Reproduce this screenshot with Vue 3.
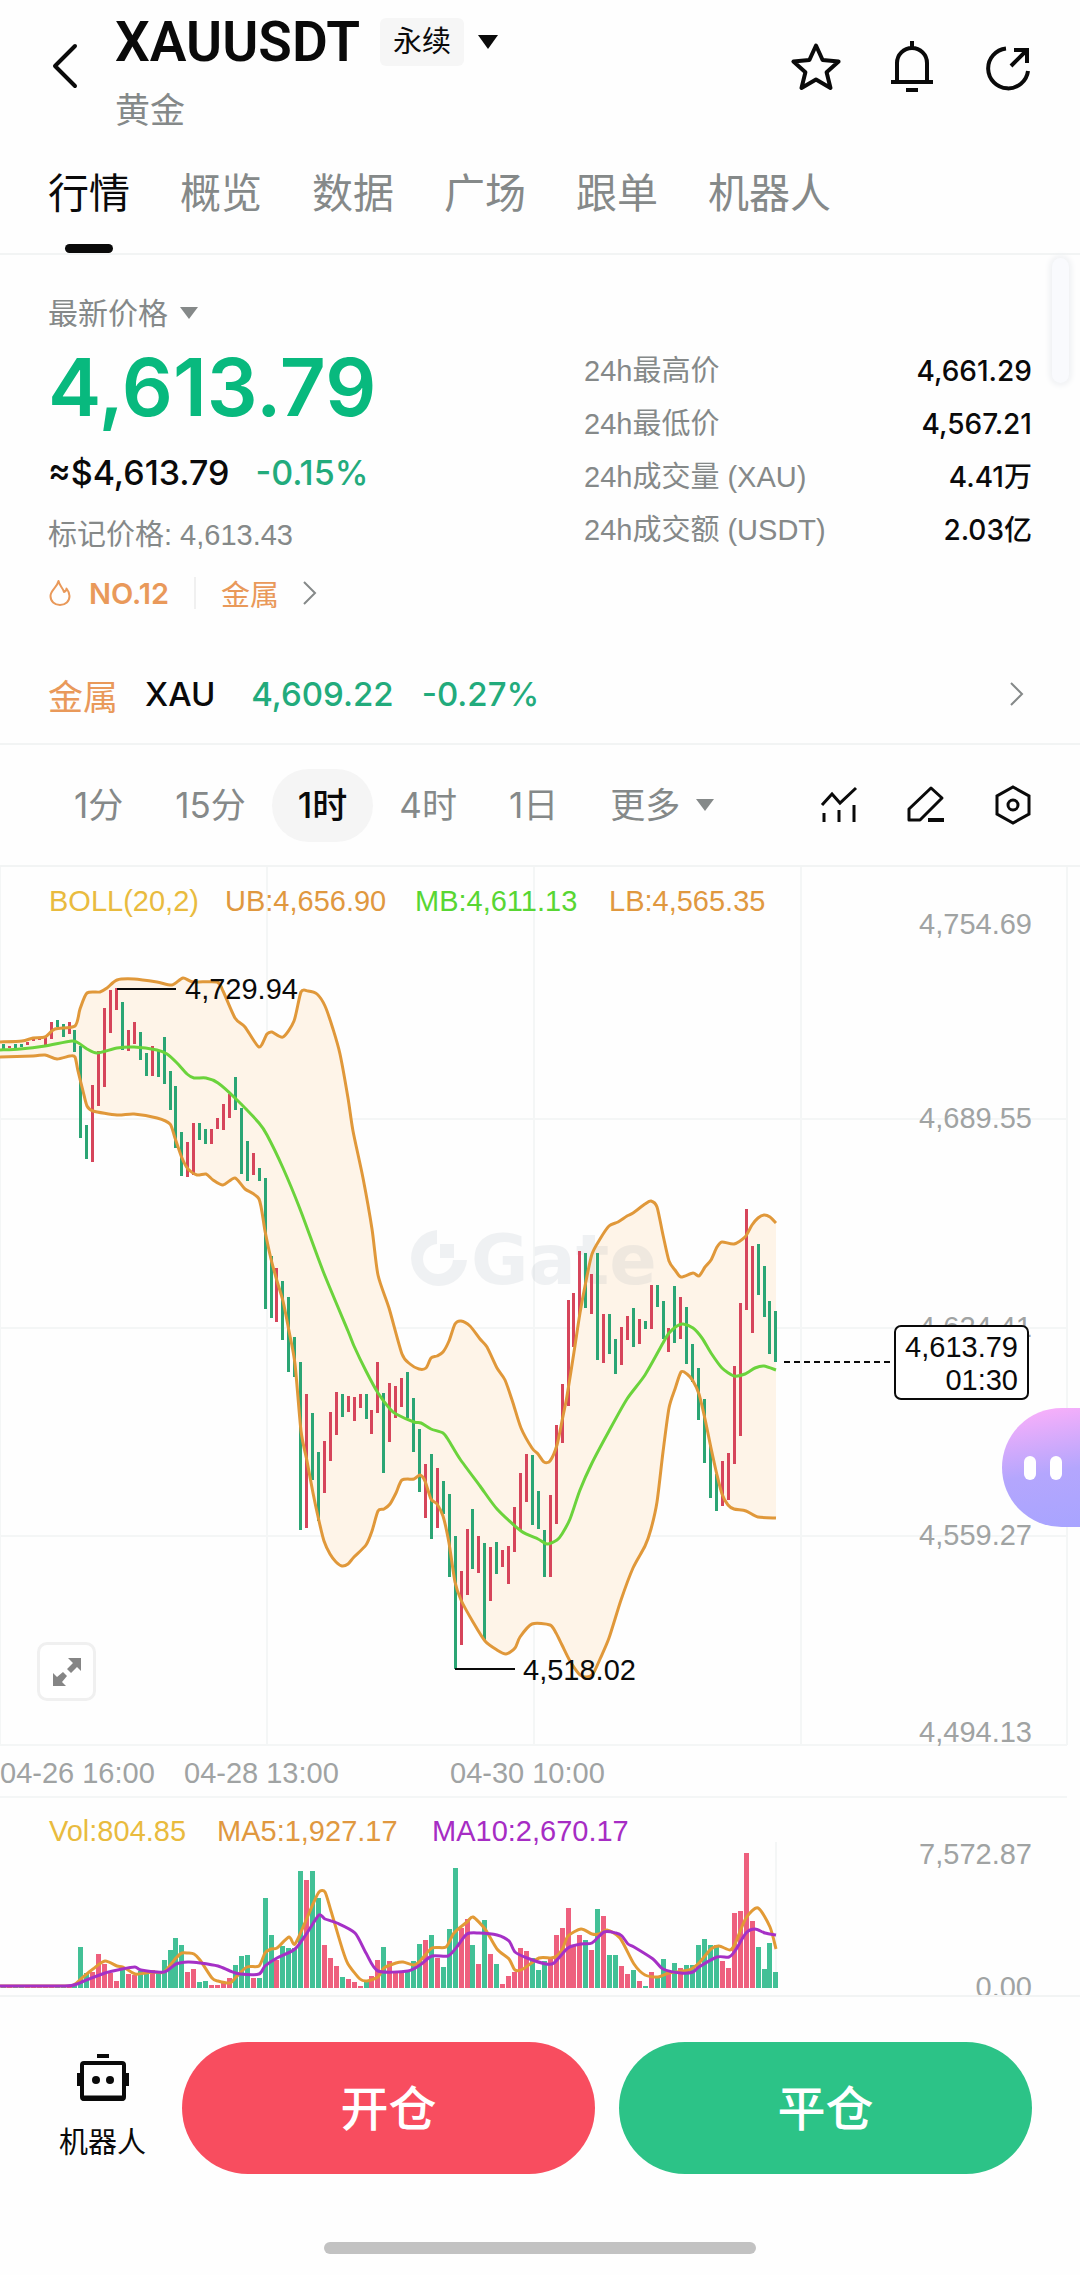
<script setup>
const tabs = ['行情', '概览', '数据', '广场', '跟单', '机器人']
const stats = [
  ['24h最高价', '4,661.29'],
  ['24h最低价', '4,567.21'],
  ['24h成交量 (XAU)', '4.41万'],
  ['24h成交额 (USDT)', '2.03亿']
]
const periods = ['1分', '15分', '1时', '4时', '1日']

const GREEN = '#2ba574'
const RED = '#d6455b'
const VOL_GREEN = '#42c096'
const VOL_RED = '#ee607e'

// direction, high, low
const candles = `g1043-1048 r1045-1047 g1043-1047 g1043-1046 r1041-1044 r1037-1040 r1036-1039 r1036-1044 r1021-1038 g1019-1026
g1023-1036 r1021-1033 g1029-1051 g1045-1137 g1124-1158 r1084-1161 r1050-1105 r1007-1086 r989-1032 r987-1009
g1001-1049 r1029-1050 r1021-1043 g1031-1059 g1052-1075 r1045-1075 g1050-1076 g1036-1083 g1070-1109 g1085-1147
g1131-1175 r1141-1176 r1122-1174 g1122-1139 g1128-1143 r1128-1143 r1117-1128 r1103-1129 r1093-1117 g1076-1109
g1107-1173 g1140-1180 r1152-1174 g1167-1180 g1177-1308 g1255-1317 r1267-1321 g1280-1339 g1296-1371 g1336-1376
g1361-1529 r1393-1527 g1412-1479 g1451-1520 r1440-1492 r1411-1460 r1391-1434 g1393-1416 r1395-1411 r1396-1420
r1393-1407 g1393-1418 r1409-1433 r1361-1412 g1392-1472 r1382-1441 r1385-1417 r1377-1406 g1371-1417 g1397-1451
g1428-1491 r1463-1517 g1453-1538 r1467-1527 g1480-1513 g1493-1576 g1535-1668 r1570-1644 r1528-1594 g1508-1568
r1535-1572 g1542-1639 r1546-1600 g1541-1573 r1549-1566 r1545-1583 r1506-1551 r1472-1529 r1453-1501 g1454-1524
g1490-1528 g1529-1576 r1494-1576 r1424-1523 r1383-1442 r1299-1405 r1292-1346 r1250-1315 g1252-1307 r1273-1313
g1252-1359 r1313-1362 g1313-1353 g1338-1373 r1326-1364 r1315-1339 g1307-1346 r1318-1343 g1320-1328 r1284-1328
g1284-1306 g1300-1338 r1327-1351 g1285-1342 r1296-1338 g1306-1363 g1343-1381 g1367-1419 g1398-1462 g1444-1497
g1473-1510 r1460-1505 r1452-1499 r1365-1463 r1302-1435 r1208-1309 r1245-1332 g1243-1294 g1265-1316 g1300-1353
g1310-1361`.split(/\s+/).map((item, i) => {
  const [high, low] = item.slice(1).split('-').map(Number)
  return { up: item[0] === 'r', high, low, x: 3.7 + 5.94 * i }
})

const volumes = [
  1, 1, 1, 1, 1, 1, 1, 1, 2, 2, 2, 2, 3, 41, 15, 16, 34, 24, 15, 7, 21, 14, 13, 17, 18, 18, 15, 28, 38, 50, 43, 16, 19, 6, 7, 3,
  3, 5, 10, 23, 32, 33, 10, 10, 90, 53, 28, 42, 40, 40, 117, 108, 117, 90, 43, 30, 22, 11, 9, 6, 2, 7, 12, 28, 41, 27,
  17, 17, 17, 27, 44, 48, 53, 30, 21, 59, 120, 60, 69, 43, 24, 68, 34, 24, 4, 12, 16, 40, 37, 30, 18, 27, 30, 53, 60,
  80, 43, 53, 48, 38, 79, 72, 33, 33, 22, 14, 18, 7, 2, 16, 10, 29, 17, 25, 20, 23, 23, 43, 49, 43, 43, 27, 20, 75,
  77, 135, 67, 41, 19, 45, 16
]

const upper = '0,1041 22,1040 33,1037 45,1036 55,1028 75,1025 80,1008 87,992 100,991 107,987 117,979 134,978 157,981 172,984 183,977 193,981 217,981 223,990 235,1017 245,1026 259,1046 267,1033 272,1031 283,1036 294,1020 301,991 308,990 317,993 325,1005 333,1028 340,1053 348,1097 353,1130 363,1177 372,1228 378,1274 389,1307 402,1353 410,1363 419,1368 426,1367 431,1357 437,1355 443,1351 449,1340 455,1323 461,1320 470,1325 480,1338 487,1346 497,1367 505,1379 513,1402 521,1427 532,1447 538,1453 544,1461 550,1460 557,1444 562,1420 567,1395 574,1351 580,1312 586,1280 592,1253 600,1238 609,1225 618,1221 627,1215 633,1212 645,1203 651,1200 657,1206 663,1234 669,1260 675,1269 681,1276 693,1272 699,1275 705,1266 711,1259 717,1246 722,1241 734,1243 745,1236 752,1224 758,1217 764,1214 770,1216 776,1222'
const middle = '0,1049 20,1048 45,1045 72,1040 80,1043 87,1048 97,1052 117,1047 134,1046 157,1049 167,1053 177,1062 187,1073 194,1077 206,1077 218,1082 235,1097 259,1122 267,1134 283,1167 300,1208 323,1270 348,1330 354,1345 366,1370 378,1392 390,1408 396,1413 414,1421 421,1422 431,1428 443,1432 449,1440 460,1458 480,1485 497,1508 521,1530 538,1538 547,1543 557,1539 562,1533 570,1518 580,1489 592,1462 609,1430 627,1398 645,1374 663,1342 669,1332 677,1325 683,1323 693,1327 702,1337 711,1352 722,1367 734,1375 745,1373 755,1367 764,1365 776,1369'
const lower = '0,1056 33,1055 45,1054 57,1058 70,1055 75,1056 78,1070 83,1090 87,1105 93,1110 117,1114 134,1113 157,1117 170,1123 175,1137 182,1157 188,1168 197,1174 206,1173 213,1179 223,1184 235,1177 245,1188 259,1198 265,1230 271,1258 277,1280 283,1300 289,1330 295,1363 301,1430 307,1460 313,1492 319,1520 324,1540 330,1553 336,1561 342,1565 348,1563 354,1556 366,1544 372,1530 378,1510 384,1508 390,1503 396,1492 402,1479 414,1478 420,1474 425,1480 431,1498 437,1503 443,1515 449,1542 455,1581 461,1599 473,1621 485,1640 497,1649 506,1653 515,1647 520,1636 532,1623 550,1624 556,1632 562,1644 570,1660 580,1674 587,1676 593,1673 600,1658 609,1637 621,1599 633,1567 645,1545 651,1528 657,1501 663,1451 669,1407 675,1388 681,1371 687,1373 693,1380 699,1393 705,1418 711,1447 717,1474 722,1493 728,1504 734,1508 746,1510 758,1516 776,1517'
const ma5 = '0,1985 65,1985 75,1983 82,1977 93,1968 105,1960 117,1965 123,1966 135,1973 146,1972 153,1971 164,1971 176,1957 182,1952 188,1952 194,1953 200,1959 212,1977 218,1980 230,1982 236,1976 247,1966 259,1965 265,1952 271,1948 277,1947 289,1936 295,1943 307,1917 313,1903 319,1891 325,1891 331,1910 342,1947 348,1963 360,1978 367,1980 378,1976 384,1967 396,1962 403,1961 414,1964 420,1960 432,1947 446,1946 454,1932 467,1921 473,1916 485,1928 497,1948 509,1958 515,1969 523,1968 539,1957 551,1957 557,1955 563,1947 568,1935 581,1928 592,1933 599,1933 607,1929 620,1937 634,1963 645,1974 658,1976 669,1972 689,1969 699,1962 711,1948 719,1945 730,1949 735,1943 746,1917 758,1907 770,1926 776,1948'
const ma10 = '0,1985 65,1985 77,1983 84,1980 105,1972 122,1968 135,1966 141,1969 164,1971 176,1963 188,1961 200,1962 218,1965 230,1970 240,1973 259,1973 265,1965 277,1957 295,1948 307,1932 319,1914 325,1918 337,1922 355,1932 366,1952 378,1970 408,1970 420,1964 432,1955 448,1955 456,1947 467,1933 479,1932 497,1934 509,1940 515,1951 527,1957 546,1963 554,1962 568,1947 581,1943 592,1942 604,1931 616,1932 622,1935 628,1943 634,1946 653,1958 663,1968 681,1972 693,1971 699,1966 717,1956 729,1956 735,1950 746,1932 755,1928 765,1932 776,1934'

// Rounds the joints of a polyline with short cubic segments
function smooth(points) {
  const p = points.split(' ').map((s) => s.split(',').map(Number))
  let d = `M${p[0]}`
  for (let i = 0; i < p.length - 1; i++) {
    const a = p[i - 1] || p[i]
    const b = p[i]
    const c = p[i + 1]
    const e = p[i + 2] || c
    const k = 8
    d += `C${b[0] + (c[0] - a[0]) / k} ${b[1] + (c[1] - a[1]) / k} ${c[0] - (e[0] - b[0]) / k} ${c[1] - (e[1] - b[1]) / k} ${c[0]} ${c[1]}`
  }
  return d
}
const band = `M${upper.split(' ').join('L')}L${lower.split(' ').reverse().join('L')}Z`

const axis = [
  [933, '4,754.69'],
  [1127, '4,689.55'],
  [1336, '4,624.41'],
  [1544, '4,559.27'],
  [1741, '4,494.13'],
  [1863, '7,572.87'],
  [1996, '0.00']
]
const dates = [
  [0, '04-26 16:00'],
  [184, '04-28 13:00'],
  [450, '04-30 10:00']
]
const legends = [
  [49, 910, '#e9bb3e', 'BOLL(20,2)'],
  [225, 910, '#e0983f', 'UB:4,656.90'],
  [415, 910, '#58d633', 'MB:4,611.13'],
  [609, 910, '#e0983f', 'LB:4,565.35'],
  [49, 1840, '#e9bb3e', 'Vol:804.85'],
  [217, 1840, '#e0983f', 'MA5:1,927.17'],
  [432, 1840, '#a62cc4', 'MA10:2,670.17']
]
</script>

<template>
  <div class="page">
    <header class="header">
      <button class="icon-btn back" aria-label="返回">
        <svg width="28" height="48" viewBox="0 0 28 48"><path d="M24 4 4 24l20 20" fill="none" stroke="#0a0a0a" stroke-width="4" stroke-linecap="round" stroke-linejoin="round" /></svg>
      </button>
      <div class="symbol">
        <div class="symbol-row">
          <h1>XAUUSDT</h1>
          <span class="badge">永续</span>
          <svg width="20" height="14" viewBox="0 0 20 14"><path d="M0 0h20L10 14z" fill="#0a0a0a" /></svg>
        </div>
        <p class="name">黄金</p>
      </div>
      <div class="actions">
        <button class="icon-btn" aria-label="收藏">
          <svg width="52" height="52" viewBox="0 0 52 52"><path d="M26 4.500l6.600 14.500 16 1.600-12 10.600L40.500 47 26 38.500 11.500 47l3.900-15.800-12-10.600 16-1.600z" fill="none" stroke="#0a0a0a" stroke-width="4" stroke-linejoin="round" /></svg>
        </button>
        <button class="icon-btn" aria-label="提醒">
          <svg width="52" height="52" viewBox="0 0 52 52"><g fill="none" stroke="#0a0a0a" stroke-width="4"><path d="M26 0v6M11 41V22a15 15 0 0 1 30 0v19M5 41h42M20 49h12" /></g></svg>
        </button>
        <button class="icon-btn" aria-label="分享">
          <svg width="52" height="52" viewBox="0 0 52 52"><g fill="none" stroke="#0a0a0a" stroke-width="4"><path d="M24 7.500A20 20 0 1 0 46 30M29 25 45 9M32 9h13v13" /></g></svg>
        </button>
      </div>
    </header>

    <nav class="tabs">
      <a v-for="(t, i) in tabs" :key="t" href="#" :class="{ active: i === 0 }">{{ t }}</a>
    </nav>

    <main>
      <section class="summary">
        <div class="quote">
          <button class="price-type">最新价格 <svg width="18" height="12" viewBox="0 0 18 12"><path d="M0 0h18L9 12z" fill="#858989" /></svg></button>
          <div class="price">4,613.79</div>
          <div class="fiat"><span>≈$4,613.79</span><span class="down">-0.15%</span></div>
          <div class="mark">标记价格: 4,613.43</div>
          <div class="tags">
            <svg class="flame" width="24" height="28" viewBox="0 0 24 28"><path d="M10.500 2c1 5 4.500 7 5.500 11 1.500-.5 2.500-2 2.500-3.500 2 2.500 3 5 3 7.500 0 5.500-4 9-9.500 9S2.500 22.500 2.500 17c0-6 6.500-8 8-15z" fill="none" stroke="#e9995a" stroke-width="2" stroke-linejoin="round" /></svg>
            <span class="rank">NO.12</span>
            <i class="divider"></i>
            <a href="#" class="sector">金属
              <svg width="14" height="24" viewBox="0 0 14 24"><path d="M1 1l11 11L1 23" fill="none" stroke="#858989" stroke-width="2" /></svg>
            </a>
          </div>
        </div>
        <dl class="stats">
          <div v-for="s in stats" :key="s[0]"><dt>{{ s[0] }}</dt><dd>{{ s[1] }}</dd></div>
        </dl>
        <div class="side-handle"></div>
      </section>

      <a href="#" class="index-row">
        <span class="metal">金属</span>
        <span class="xau">XAU</span>
        <span class="down">4,609.22</span>
        <span class="down pct">-0.27%</span>
        <svg width="14" height="24" viewBox="0 0 14 24"><path d="M1 1l11 11L1 23" fill="none" stroke="#858989" stroke-width="2" /></svg>
      </a>

      <div class="periods">
        <button v-for="p in periods" :key="p" :class="{ active: p === '1时' }">{{ p }}</button>
        <button class="more">更多 <svg width="18" height="12" viewBox="0 0 18 12"><path d="M0 0h18L9 12z" fill="#858989" /></svg></button>
        <div class="tools">
          <button class="icon-btn" aria-label="指标">
            <svg width="40" height="40" viewBox="0 0 40 40"><g fill="none" stroke="#0a0a0a" stroke-width="3"><path d="M3 20l10-11 8 9L37 3M5 28v9M20 25v12M35 20v17" /></g></svg>
          </button>
          <button class="icon-btn" aria-label="画线">
            <svg width="40" height="40" viewBox="0 0 40 40"><g fill="none" stroke="#0a0a0a" stroke-width="3" stroke-linejoin="round"><path d="M25 3l11 10-22 22H3V24z" /><path d="M22 35h16" stroke-width="4" /></g></svg>
          </button>
          <button class="icon-btn" aria-label="设置">
            <svg width="40" height="40" viewBox="0 0 40 40"><g fill="none" stroke="#0a0a0a" stroke-width="3"><path d="M20 2l16 9v18l-16 9-16-9V11z" /><circle cx="20" cy="20" r="5" /></g></svg>
          </button>
        </div>
      </div>

      <section class="chart">
        <svg viewBox="0 866 1080 1128" class="plot">
          <g fill="none" stroke="#f4f6f6" stroke-width="2">
            <path d="M0 1118H1067M0 1327H1067M0 1535H1067M0 1744H1067M0 1796H1067M0 866V1744M267 866V1744M534 866V1744M801 866V1744M1067 866V1744M776 1841V1987" />
          </g>
          <path :d="band" fill="#fef4e8" />
          <g class="watermark" fill="#8d9aa6" opacity="0.120">
            <path d="M437 1229a28 28 0 1 0 30 30H453a15 15 0 1 1-16-16z" />
            <path d="M440 1243h14v14h-14z" />
            <text x="471" y="1283">Gate</text>
          </g>
          <g stroke-width="3" shape-rendering="crispEdges">
            <path v-for="(c, i) in candles" :key="i" :d="`M${c.x} ${c.high}V${c.low}`" :stroke="c.up ? RED : GREEN" />
          </g>
          <g fill="none" stroke="#e0983a" stroke-width="3" stroke-linejoin="round">
            <path :d="smooth(upper)" />
            <path :d="smooth(lower)" />
            <path :d="smooth(middle)" stroke="#6bd33c" />
          </g>
          <g stroke-width="5" shape-rendering="crispEdges">
            <path v-for="(v, i) in volumes" :key="i" :d="`M${candles[i].x} 1987v${-v}`" :stroke="candles[i].up ? VOL_RED : VOL_GREEN" />
          </g>
          <g fill="none" stroke-width="3" stroke-linejoin="round">
            <path :d="smooth(ma5)" stroke="#e29a36" />
            <path :d="smooth(ma10)" stroke="#a530c6" />
          </g>

          <g class="labels">
            <text v-for="l in legends" :key="l[3]" :x="l[0]" :y="l[1]" :fill="l[2]">{{ l[3] }}</text>
            <g fill="#a0a3a3">
              <text v-for="a in axis" :key="a[1]" x="1032" :y="a[0]" text-anchor="end">{{ a[1] }}</text>
              <text v-for="d in dates" :key="d[1]" :x="d[0]" y="1782">{{ d[1] }}</text>
            </g>
            <path d="M117 988H176M455 1668H515" stroke="#0a0a0a" stroke-width="2" />
            <text x="185" y="998" fill="#0a0a0a">4,729.94</text>
            <text x="523" y="1679" fill="#0a0a0a">4,518.02</text>
            <path d="M784 1361H894" stroke="#0a0a0a" stroke-width="2" stroke-dasharray="6 4" />
            <rect x="895" y="1325" width="133" height="73" rx="6" fill="#fff" stroke="#0a0a0a" stroke-width="2" />
            <g fill="#0a0a0a" text-anchor="end">
              <text x="1018" y="1356">4,613.79</text>
              <text x="1018" y="1389">01:30</text>
            </g>
          </g>
        </svg>
        <button class="expand" aria-label="全屏">
          <svg width="28" height="28" viewBox="0 0 28 28"><g fill="#858585"><path d="M15 0h13v13l-4-4-6 6-4-4 6-6zM13 28H0V15l4 4 6-5 4 4-5 6z" /></g></svg>
        </button>
        <button class="assistant" aria-label="助手"><i></i><i></i></button>
      </section>
    </main>

    <footer class="footer">
      <button class="robot">
        <svg width="52" height="50" viewBox="0 0 52 50"><g fill="none" stroke="#0a0a0a" stroke-width="4"><rect x="5" y="10" width="42" height="36" rx="2" /><path d="M20 3h12M2 20v13M50 20v13" /><path d="M5 45h42" stroke-width="5" /></g><circle cx="19" cy="27" r="4" fill="#0a0a0a" /><circle cx="33" cy="27" r="4" fill="#0a0a0a" /></svg>
        <span>机器人</span>
      </button>
      <button class="trade open">开仓</button>
      <button class="trade close">平仓</button>
    </footer>
    <div class="home-bar"></div>
  </div>
</template>

<style>
body {
  margin: 0;
  background: #fefefe;
}
</style>

<style scoped>
.page {
  font-family: Inter, "Noto Sans CJK SC", sans-serif;
  color: #0a0a0a;
  background: #fefefe;
  overflow: hidden;
}
button {
  font: inherit;
  color: inherit;
  background: none;
  border: 0;
  padding: 0;
}
a {
  color: inherit;
  text-decoration: none;
}
svg {
  display: block;
  flex: none;
}
.header {
  display: flex;
  align-items: flex-start;
  padding: 14px 46px 0 51px;
}
.back {
  margin-top: 28px;
}
.symbol {
  margin-left: 36px;
}
.symbol-row {
  display: flex;
  align-items: center;
  height: 56px;
}
h1 {
  margin: 0;
  font-family: Roboto, sans-serif;
  font-size: 55px;
  line-height: 56px;
  font-weight: 600;
}
.badge {
  margin: 0 14px 0 20px;
  padding: 0 13px;
  font-size: 29px;
  line-height: 48px;
  background: #f6f6f6;
  border-radius: 6px;
}
.name {
  margin: 18px 0 0;
  font-size: 35px;
  line-height: 44px;
  color: #858989;
}
.actions {
  display: flex;
  gap: 44px;
  margin: 27px 0 0 auto;
}
.tabs {
  display: flex;
  gap: 50px;
  padding: 31px 48px 0;
  font-size: 41px;
  color: #858989;
  border-bottom: 2px solid #f2f4f4;
}
.tabs a {
  position: relative;
  line-height: 60px;
  padding-bottom: 30px;
}
.tabs .active {
  color: #0a0a0a;
}
.tabs .active::after {
  content: "";
  position: absolute;
  left: 17px;
  right: 17px;
  bottom: 0;
  height: 9px;
  border-radius: 5px;
  background: #0a0a0a;
}
.summary {
  position: relative;
  display: flex;
  justify-content: space-between;
  padding: 36px 48px 0;
}
.price-type {
  display: flex;
  align-items: center;
  gap: 12px;
  font-size: 30px;
  line-height: 44px;
  color: #858989;
}
.price {
  font-size: 80px;
  font-weight: 600;
  line-height: 104px;
  color: #08b97e;
}
.fiat {
  display: flex;
  gap: 26px;
  font-size: 34px;
  font-weight: 500;
  line-height: 68px;
}
.down {
  color: #22ab7c;
}
.mark,
.stats dt,
.labels {
  font-family: "Liberation Sans", "Noto Sans CJK SC", sans-serif;
  font-size: 29px;
}
.mark {
  line-height: 56px;
  color: #858989;
}
.tags {
  display: flex;
  align-items: center;
  height: 60px;
  font-size: 29px;
  color: #e9995a;
}
.rank {
  margin-left: 17px;
  font-weight: 600;
}
.divider {
  width: 2px;
  height: 32px;
  margin: 0 25px;
  background: #f0f0f0;
}
.sector {
  display: flex;
  align-items: center;
  gap: 24px;
}
.stats {
  width: 448px;
  margin: 54px 0 0;
  line-height: 53px;
}
.stats div {
  display: flex;
  justify-content: space-between;
}
.stats dt {
  color: #858989;
}
.stats dd {
  margin: 0;
  font-size: 28px;
  font-weight: 500;
}
.side-handle {
  position: absolute;
  top: 3px;
  right: 11px;
  width: 17px;
  height: 125px;
  border-radius: 9px;
  background: #f9fafd;
  box-shadow: 0 0 6px 2px #eceef1;
}
.index-row {
  display: flex;
  align-items: center;
  height: 98px;
  margin-top: 22px;
  padding: 0 56px 0 48px;
  font-size: 33px;
  font-weight: 500;
  border-bottom: 2px solid #f2f4f4;
}
.metal {
  color: #e9995a;
  font-size: 35px;
  font-weight: 400;
}
.xau {
  margin: 0 36px 0 27px;
}
.pct {
  margin: 0 auto 0 28px;
}
.periods {
  display: flex;
  align-items: center;
  height: 120px;
  padding: 0 47px 0 48px;
  font-size: 35px;
  color: #858989;
  border-bottom: 2px solid #f2f4f4;
}
.periods > button {
  padding: 0 26px;
  line-height: 73px;
  border-radius: 37px;
}
.periods > .active {
  color: #0a0a0a;
  font-weight: 500;
  background: #f5f5f5;
}
.periods > .more {
  display: flex;
  align-items: center;
  gap: 16px;
}
.tools {
  display: flex;
  gap: 47px;
  margin-left: auto;
}
.chart {
  position: relative;
  border-bottom: 2px solid #f2f4f4;
}
.plot {
  width: 100%;
  height: auto;
}
.watermark {
  font-family: "DejaVu Sans", sans-serif;
  font-size: 70px;
  font-weight: 700;
}
.expand {
  position: absolute;
  left: 37px;
  bottom: 294px;
  display: grid;
  place-items: center;
  width: 59px;
  height: 59px;
  border: 3px solid #f0f0f0;
  border-radius: 10px;
  background: #fff;
}
.assistant {
  position: absolute;
  right: 0;
  bottom: 468px;
  display: flex;
  align-items: center;
  gap: 14px;
  width: 78px;
  height: 119px;
  padding-left: 22px;
  border-radius: 60px 0 0 60px;
  background: linear-gradient(170deg, #ffb0fa, #b4a6fd 55%, #a8a4ff);
}
.assistant i {
  width: 12px;
  height: 24px;
  border-radius: 6px;
  background: #fff;
}
.footer {
  display: flex;
  align-items: center;
  gap: 24px;
  padding: 45px 48px 0 59px;
}
.robot {
  display: flex;
  flex-direction: column;
  align-items: center;
  gap: 20px;
  margin-right: 12px;
  font-size: 29px;
  line-height: 40px;
}
.trade {
  flex: 1;
  height: 132px;
  padding-bottom: 6px;
  border-radius: 66px;
  color: #fff;
  font-size: 48px;
  font-weight: 500;
}
.open {
  background: #f84d5f;
}
.close {
  background: #2cc387;
}
.home-bar {
  width: 40%;
  height: 12px;
  margin: 68px auto 21px;
  border-radius: 6px;
  background: #c2c2c2;
}
</style>
